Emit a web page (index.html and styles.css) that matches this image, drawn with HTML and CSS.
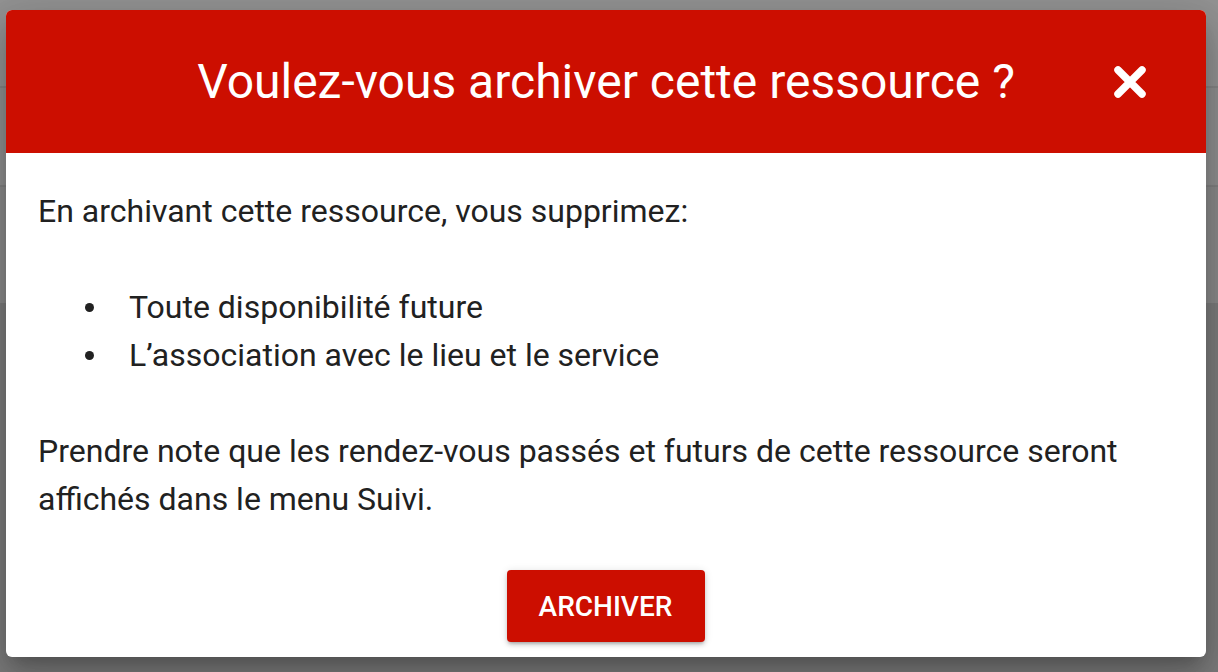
FILE: index.html
```html
<!DOCTYPE html>
<html lang="fr">
<head>
<meta charset="utf-8">
<title>Archiver</title>
<link rel="stylesheet" href="styles.css">
</head>
<body>
<div class="page">
  <div class="band band-top"></div>
  <div class="band band-mid"></div>
  <div class="band band-low"></div>
  <div class="band band-rest"></div>
</div>
<div class="dialog" role="dialog">
  <header class="dialog-header">
    <h1 class="dialog-title">Voulez-vous archiver cette ressource ?</h1>
    <button class="close" aria-label="Fermer">
      <svg viewBox="0 0 36 36" width="36" height="36">
        <path d="M6 6 L30 30 M30 6 L6 30" stroke="#fff" stroke-width="7.5" stroke-linecap="round" fill="none"/>
      </svg>
    </button>
  </header>
  <div class="dialog-body">
    <p class="para">En archivant cette ressource, vous supprimez:</p>
    <ul class="list">
      <li class="item">Toute disponibilité future</li>
      <li class="item">L’association avec le lieu et le service</li>
    </ul>
    <p class="para">Prendre note que les rendez-vous passés et futurs de cette ressource seront affichés dans le menu Suivi.</p>
    <div class="actions">
      <button class="btn">ARCHIVER</button>
    </div>
  </div>
</div>
</body>
</html>
```

FILE: styles.css
```css
* { box-sizing: border-box; }
html, body { margin: 0; padding: 0; }
body {
  width: 1218px;
  height: 672px;
  overflow: hidden;
  background: #7c7c7c;
  font-family: Roboto, "Liberation Sans", sans-serif;
  position: relative;
}
.page { display: flex; flex-direction: column; }
.band-top { height: 88px; background: #939393; border-bottom: 2px solid #858585; }
.band-mid { height: 99px; background: #8f8f8f; border-bottom: 2px solid #848484; }
.band-low { height: 116px; background: #8a8a8a; box-shadow: 0 2px 4px rgba(0,0,0,0.25); }
.band-rest { height: 367px; background: #7c7c7c; }

.dialog {
  position: absolute;
  left: 6px;
  top: 10px;
  width: 1200px;
  height: 647px;
  background: #fff;
  border-radius: 6px;
  overflow: hidden;
  box-shadow: 0 11px 15px -7px rgba(0,0,0,0.2), 0 24px 38px 3px rgba(0,0,0,0.14), 0 9px 46px 8px rgba(0,0,0,0.12);
}
.dialog-header {
  height: 143px;
  background: #cc0e00;
  display: flex;
  align-items: center;
  justify-content: center;
  position: relative;
}
.dialog-title {
  margin: 0;
  color: #fff;
  font-weight: 400;
  font-size: 48px;
  letter-spacing: 0;
}
.close {
  position: absolute;
  right: 58px;
  top: 54px;
  width: 36px;
  height: 36px;
  padding: 0;
  border: 0;
  background: none;
  display: block;
}
.close svg { display: block; }
.dialog-body {
  padding: 34px 33px 0 32px;
  color: #212121;
  font-size: 32px;
  line-height: 48px;
}
.para { margin: 0 0 48px; }
.list { list-style: none; margin: 0 0 48px; padding: 0 0 0 91px; }
.item { position: relative; }
.item::before {
  content: "";
  position: absolute;
  left: -44px;
  top: 20px;
  width: 9px;
  height: 9px;
  border-radius: 50%;
  background: #212121;
}
.actions { display: flex; justify-content: center; }
.btn {
  width: 198px;
  height: 72px;
  margin-top: -1px;
  border: 0;
  border-radius: 4px;
  background: #cc0e00;
  color: #fff;
  font-family: Roboto, "Liberation Sans", sans-serif;
  font-weight: 500;
  font-size: 28px;
  box-shadow: 0 3px 3px -2px rgba(0,0,0,0.2), 0 3px 4px 0 rgba(0,0,0,0.14), 0 1px 8px 0 rgba(0,0,0,0.12);
}
```
